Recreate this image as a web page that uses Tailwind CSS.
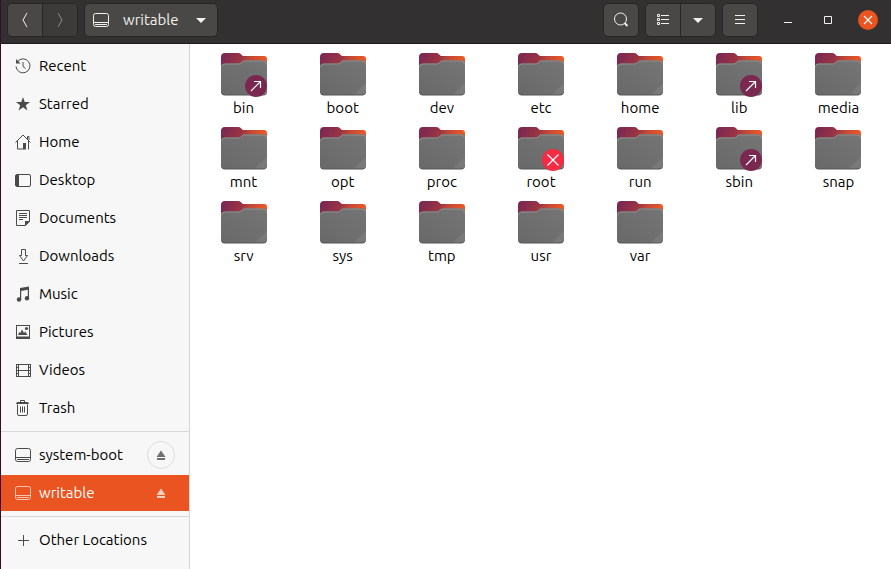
<!DOCTYPE html>
<html lang="en">
<head>
<meta charset="utf-8">
<meta name="viewport" content="width=device-width, initial-scale=1">
<title>writable</title>
<script src="https://cdn.jsdelivr.net/npm/@tailwindcss/browser@4"></script>
</head>
<body class="bg-white text-[15px] leading-5 text-black font-['Ubuntu','Noto_Sans',sans-serif]">
<svg class="hidden" aria-hidden="true">
  <symbol id="drive" viewBox="0 0 16 16"><path d="M2.500 1.500h11q2 0 2 2v9q0 2-2 2h-11q-2 0-2-2v-9q0-2 2-2zM1 10.500h14M2 12.500h12" fill="none" stroke="currentColor"/></symbol>
  <symbol id="eject" viewBox="0 0 16 16"><path d="M8 3.500l4.500 6.500h-9zM4 11h8v2H4z" fill="currentColor"/></symbol>
  <symbol id="folder" viewBox="0 0 46 44">
    <path d="M0 4q0-4 4-4h13q2 0 3 1.200l1.800 1.800H43q3 0 3 3v10H0z" fill="url(#back)"/>
    <path d="M0 14.500q0-4 4-4h14q1 0 1.800-.8l1.400-1.400q.8-.8 2-.8H42q4 0 4 4V38.500q0 4-4 4H4q-4 0-4-4z" fill="#555"/>
    <path d="M0 14.500q0-4 4-4h14q1 0 1.800-.8l1.400-1.400q.8-.8 2-.8H42q4 0 4 4V37.500q0 4-4 4H4q-4 0-4-4z" fill="url(#front)"/>
    <path d="M46 30v7.500q0 4-4 4H34z" fill="#fff" opacity=".07"/>
    <path d="M.5 14q0-3 3.500-3h14q1.200 0 2-.8l1.400-1.400q.8-.8 1.800-.8H42q3.500 0 3.500 3.500" fill="none" stroke="#a09c9c" stroke-width=".7"/>
  </symbol>
  <symbol id="link" viewBox="0 0 22 22"><circle cx="11" cy="11" r="11" fill="#7b2850"/><path d="M6 16L15.500 6.500M9 6.500h6.500V13" fill="none" stroke="#fff" stroke-width="1.200"/></symbol>
  <symbol id="locked" viewBox="0 0 22 22"><circle cx="11" cy="11" r="11" fill="#f22c42"/><path d="M5.500 5.500l11 11M16.500 5.500l-11 11" fill="none" stroke="#fff" stroke-width="1.200"/></symbol>
</svg>
<svg class="absolute size-0" aria-hidden="true"><defs>
  <linearGradient id="back" x1="0" y1=".2" x2="1" y2=".4"><stop offset="0" stop-color="#782754"/><stop offset=".45" stop-color="#9a3442"/><stop offset=".65" stop-color="#c34936"/><stop offset="1" stop-color="#f05a24"/></linearGradient>
  <linearGradient id="front" x1="0" y1="1" x2="1" y2="0"><stop offset="0" stop-color="#696969"/><stop offset="1" stop-color="#757575"/></linearGradient>
</defs></svg>

<div class="flex min-h-screen flex-col border-l border-[#3a0a2c]">
  <header class="flex h-11 items-start border-b border-[#1d1b1b] bg-[#323030] pt-[3px] pr-[13px] pl-[6px] text-[#f2f1ef]">
    <nav class="flex h-[34px] overflow-hidden rounded-[5px] border border-[#272525]" aria-label="History">
      <button class="grid w-[34px] place-items-center bg-[#4a4846]" aria-label="Back"><svg class="size-4" viewBox="0 0 16 16" fill="none" stroke="currentColor"><path d="M10 1L6 8l4 7"/></svg></button>
      <button class="grid w-[35px] place-items-center border-l border-[#272525] bg-[#3d3b3a] text-[#8d8b89]" aria-label="Forward"><svg class="size-4" viewBox="0 0 16 16" fill="none" stroke="currentColor"><path d="M6 1l4 7-4 7"/></svg></button>
    </nav>
    <button class="ml-[6px] flex h-[34px] w-[134px] items-center rounded-[5px] border border-[#272525] bg-[#4a4846] px-2">
      <svg class="size-4"><use href="#drive"/></svg>
      <span class="ml-[14px]">writable</span>
      <svg class="ml-auto size-4" viewBox="0 0 16 16" fill="currentColor"><path d="M3 6h10l-5 5z"/></svg>
    </button>
    <button class="ml-auto grid h-[34px] w-9 place-items-center rounded-[5px] border border-[#272525] bg-[#4a4846]" aria-label="Search"><svg class="size-4" viewBox="0 0 16 16" fill="none" stroke="currentColor"><circle cx="7.500" cy="7" r="6"/><path d="M11.500 11l3 3" stroke-width="1.800"/></svg></button>
    <div class="ml-[6px] flex h-[34px] overflow-hidden rounded-[5px] border border-[#272525] bg-[#4a4846]">
      <button class="grid w-[34px] place-items-center" aria-label="List view"><svg class="size-4" viewBox="0 0 16 16" fill="none" stroke="currentColor"><path d="M2.500 2.500h2v2h-2zM2.500 6.500h2v2h-2zM2.500 10.500h2v2h-2zM6 3.500h8M6 7.500h8M6 11.500h8"/></svg></button>
      <button class="grid w-[35px] place-items-center border-l border-[#272525]" aria-label="View options"><svg class="size-4" viewBox="0 0 16 16" fill="currentColor"><path d="M3 6h10l-5 5z"/></svg></button>
    </div>
    <button class="ml-[6px] grid h-[34px] w-9 place-items-center rounded-[5px] border border-[#272525] bg-[#4a4846]" aria-label="Menu"><svg class="size-4" viewBox="0 0 16 16" stroke="currentColor"><path d="M3 3.500h10M3 7.500h10M3 11.500h10"/></svg></button>
    <div class="ml-5 flex h-[34px] items-center gap-5">
      <button class="grid size-5 place-items-center" aria-label="Minimize"><svg class="size-4" viewBox="0 0 16 16" stroke="currentColor"><path d="M4 10.500h8"/></svg></button>
      <button class="grid size-5 place-items-center" aria-label="Maximize"><svg class="size-4" viewBox="0 0 16 16" fill="none" stroke="currentColor"><path d="M4.500 4.500h7v7h-7z"/></svg></button>
      <button class="grid size-5 place-items-center rounded-full bg-[#e95420]" aria-label="Close"><svg class="size-4" viewBox="0 0 16 16" stroke="currentColor" stroke-width="1.300"><path d="M4 4l8 8M12 4l-8 8"/></svg></button>
    </div>
  </header>

  <div class="flex flex-1">
    <aside class="w-[189px] shrink-0 border-r border-[#d5d5d5] bg-[#f7f7f7] py-1">
      <nav class="flex flex-col gap-[2px]" aria-label="Places">
        <a href="#" class="flex h-9 items-center gap-2 pl-[14px]"><svg class="size-4 text-[#4a4a4a]" viewBox="0 0 16 16" fill="none" stroke="currentColor"><path d="M2.500 3.500A7 7 0 1 1 1 8.500M8 4v4.500l2.500 2"/><path d="M1 1v4.500h4.500z" fill="currentColor" stroke="none"/></svg>Recent</a>
        <a href="#" class="flex h-9 items-center gap-2 pl-[14px]"><svg class="size-4 text-[#4a4a4a]" viewBox="0 0 16 16" fill="currentColor"><path d="M8 1l1.700 5H15l-4.200 3.200L12.400 14.500 8 11.300l-4.400 3.200L5.200 9.200 1 6h5.300z"/></svg>Starred</a>
        <a href="#" class="flex h-9 items-center gap-2 pl-[14px]"><svg class="size-4 text-[#4a4a4a]" viewBox="0 0 16 16" fill="none" stroke="currentColor"><path d="M.5 8.500L8 1l7.500 7.500M2.500 7v8H8M13.500 7v8.500M12.500 5V2.500h1.500V6"/><path d="M8 9h3v6.500H8z" fill="currentColor" stroke="none"/></svg>Home</a>
        <a href="#" class="flex h-9 items-center gap-2 pl-[14px]"><svg class="size-4 text-[#4a4a4a]" viewBox="0 0 16 16" fill="none" stroke="currentColor"><rect x=".5" y="2.500" width="15" height="12" rx="1.500"/><path d="M1 3h3v11H1z" fill="currentColor" stroke="none"/></svg>Desktop</a>
        <a href="#" class="flex h-9 items-center gap-2 pl-[14px]"><svg class="size-4 text-[#4a4a4a]" viewBox="0 0 16 16" fill="none" stroke="currentColor"><path d="M1.500.5h13v11l-4 4h-9zM4 3.500h8M4 5.500h8M4 7.500h8M4 9.500h4"/><path d="M10 16v-5h5z" fill="currentColor" stroke="none"/></svg>Documents</a>
        <a href="#" class="flex h-9 items-center gap-2 pl-[14px]"><svg class="size-4 text-[#4a4a4a]" viewBox="0 0 16 16" fill="none" stroke="currentColor"><path d="M6.500 1.500h4v6h2l-4 5.500-4-5.500h2zM4 15.500h9"/></svg>Downloads</a>
        <a href="#" class="flex h-9 items-center gap-2 pl-[14px]"><svg class="size-4 text-[#4a4a4a]" viewBox="0 0 16 16" fill="currentColor"><path d="M5 2l9-1.500V12h-1.200V3.800L6.200 5v9H5z"/><circle cx="4" cy="13.500" r="2.200"/><circle cx="12" cy="12.200" r="2.200"/></svg>Music</a>
        <a href="#" class="flex h-9 items-center gap-2 pl-[14px]"><svg class="size-4 text-[#4a4a4a]" viewBox="0 0 16 16" fill="currentColor"><path d="M1 1h14v14H1zM2 2v10.500h12V2z" fill-rule="evenodd"/><path d="M3 11l1.500-3 1 .8L7 5.500 9 9l1.200-1.500L12.500 11z"/><circle cx="11.500" cy="4.500" r="1.600"/></svg>Pictures</a>
        <a href="#" class="flex h-9 items-center gap-2 pl-[14px]"><svg class="size-4 text-[#4a4a4a]" viewBox="0 0 16 16" fill="none" stroke="currentColor"><path d="M1.500 2v13M15.500 2v13M3.500 2v13M13.500 2v13M3.500 2.500h10M3.500 8.500h10M3.500 14.500h10"/><path d="M2.500 2v13M14.500 2v13" stroke-dasharray="1 2"/></svg>Videos</a>
        <a href="#" class="flex h-9 items-center gap-2 pl-[14px]"><svg class="size-4 text-[#4a4a4a]" viewBox="0 0 16 16" fill="none" stroke="currentColor"><path d="M2.500 4.500v9.500q0 1.500 1.500 1.500h7q1.500 0 1.500-1.500V4.500M5.500 6.500v6M7.500 6.500v6M9.500 6.500v6M5.500 2V.5h4V2"/><path d="M1 4q0-2 2-2h9q2 0 2 2z" fill="currentColor" stroke="none"/></svg>Trash</a>
      </nav>
      <hr class="mt-[5px] border-[#d9d9d9]">
      <div class="mt-[5px] flex flex-col gap-[2px]">
        <div class="flex h-9 items-center pr-[14px] pl-[14px]">
          <a href="#" class="flex flex-1 items-center gap-2"><svg class="size-4 text-[#4a4a4a]"><use href="#drive"/></svg>system-boot</a>
          <button class="grid size-7 place-items-center rounded-full border border-[#dcdcdc] text-[#707070]" aria-label="Eject system-boot"><svg class="size-4"><use href="#eject"/></svg></button>
        </div>
        <div class="flex h-9 items-center bg-[#e95420] pr-[14px] pl-[14px] text-white">
          <a href="#" class="flex flex-1 items-center gap-2"><svg class="size-4 text-[#f8c3b0]"><use href="#drive"/></svg>writable</a>
          <button class="grid size-7 place-items-center text-[#f9cfc0]" aria-label="Eject writable"><svg class="size-4"><use href="#eject"/></svg></button>
        </div>
      </div>
      <hr class="mt-[5px] border-[#d9d9d9]">
      <a href="#" class="mt-[5px] flex h-9 items-center gap-2 pl-[14px]"><svg class="size-4 text-[#4a4a4a]" viewBox="0 0 16 16" stroke="currentColor"><path d="M3 8.500h11M8.500 3v11"/></svg>Other Locations</a>
    </aside>

    <main class="flex-1 pt-[9px] pr-[3px] pl-1">
      <ul class="grid grid-cols-7">
        <li class="flex h-[74px] flex-col items-center gap-px"><span class="relative"><svg class="h-11 w-[46px]"><use href="#folder"/></svg><svg class="absolute right-0 bottom-0 size-[22px]"><use href="#link"/></svg></span><span>bin</span></li>
        <li class="flex h-[74px] flex-col items-center gap-px"><svg class="h-11 w-[46px]"><use href="#folder"/></svg><span>boot</span></li>
        <li class="flex h-[74px] flex-col items-center gap-px"><svg class="h-11 w-[46px]"><use href="#folder"/></svg><span>dev</span></li>
        <li class="flex h-[74px] flex-col items-center gap-px"><svg class="h-11 w-[46px]"><use href="#folder"/></svg><span>etc</span></li>
        <li class="flex h-[74px] flex-col items-center gap-px"><svg class="h-11 w-[46px]"><use href="#folder"/></svg><span>home</span></li>
        <li class="flex h-[74px] flex-col items-center gap-px"><span class="relative"><svg class="h-11 w-[46px]"><use href="#folder"/></svg><svg class="absolute right-0 bottom-0 size-[22px]"><use href="#link"/></svg></span><span>lib</span></li>
        <li class="flex h-[74px] flex-col items-center gap-px"><svg class="h-11 w-[46px]"><use href="#folder"/></svg><span>media</span></li>
        <li class="flex h-[74px] flex-col items-center gap-px"><svg class="h-11 w-[46px]"><use href="#folder"/></svg><span>mnt</span></li>
        <li class="flex h-[74px] flex-col items-center gap-px"><svg class="h-11 w-[46px]"><use href="#folder"/></svg><span>opt</span></li>
        <li class="flex h-[74px] flex-col items-center gap-px"><svg class="h-11 w-[46px]"><use href="#folder"/></svg><span>proc</span></li>
        <li class="flex h-[74px] flex-col items-center gap-px"><span class="relative"><svg class="h-11 w-[46px]"><use href="#folder"/></svg><svg class="absolute right-0 bottom-0 size-[22px]"><use href="#locked"/></svg></span><span>root</span></li>
        <li class="flex h-[74px] flex-col items-center gap-px"><svg class="h-11 w-[46px]"><use href="#folder"/></svg><span>run</span></li>
        <li class="flex h-[74px] flex-col items-center gap-px"><span class="relative"><svg class="h-11 w-[46px]"><use href="#folder"/></svg><svg class="absolute right-0 bottom-0 size-[22px]"><use href="#link"/></svg></span><span>sbin</span></li>
        <li class="flex h-[74px] flex-col items-center gap-px"><svg class="h-11 w-[46px]"><use href="#folder"/></svg><span>snap</span></li>
        <li class="flex h-[74px] flex-col items-center gap-px"><svg class="h-11 w-[46px]"><use href="#folder"/></svg><span>srv</span></li>
        <li class="flex h-[74px] flex-col items-center gap-px"><svg class="h-11 w-[46px]"><use href="#folder"/></svg><span>sys</span></li>
        <li class="flex h-[74px] flex-col items-center gap-px"><svg class="h-11 w-[46px]"><use href="#folder"/></svg><span>tmp</span></li>
        <li class="flex h-[74px] flex-col items-center gap-px"><svg class="h-11 w-[46px]"><use href="#folder"/></svg><span>usr</span></li>
        <li class="flex h-[74px] flex-col items-center gap-px"><svg class="h-11 w-[46px]"><use href="#folder"/></svg><span>var</span></li>
      </ul>
    </main>
  </div>
</div>
</body>
</html>
